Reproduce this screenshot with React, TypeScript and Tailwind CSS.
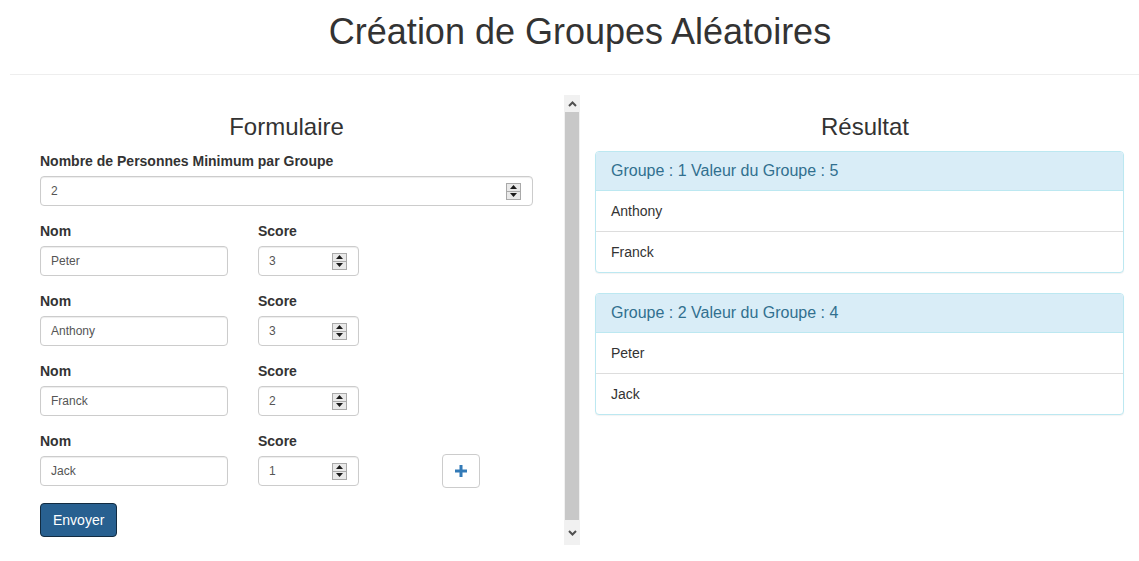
import React from 'react';

const font = { fontFamily: '"Liberation Sans", Arial, sans-serif' };

const Spinner: React.FC = () => (
  <div className="flex flex-col w-[15px] h-[17px] border border-[#a9a9a9] bg-[#e9e9e9] shrink-0">
    <div className="flex-1 flex items-center justify-center border-b border-[#a9a9a9]">
      <svg width="7" height="4" viewBox="0 0 7 4"><path d="M0 4 L3.5 0 L7 4 Z" fill="#1a1a1a" /></svg>
    </div>
    <div className="flex-1 flex items-center justify-center">
      <svg width="7" height="4" viewBox="0 0 7 4"><path d="M0 0 L3.5 4 L7 0 Z" fill="#1a1a1a" /></svg>
    </div>
  </div>
);

const NumberField: React.FC<{ value: string; className?: string }> = ({ value, className }) => (
  <div
    className={`flex items-center h-[30px] border border-[#ccc] rounded-[4px] bg-white pl-[10px] pr-[11px] shadow-[inset_0_1px_1px_rgba(0,0,0,0.075)] ${className ?? ''}`}
  >
    <span className="flex-1 text-[12px] text-[#555]">{value}</span>
    <Spinner />
  </div>
);

const TextField: React.FC<{ value: string }> = ({ value }) => (
  <div className="flex items-center w-[188px] h-[30px] border border-[#ccc] rounded-[4px] bg-white px-[10px] shadow-[inset_0_1px_1px_rgba(0,0,0,0.075)]">
    <span className="text-[12px] text-[#555]">{value}</span>
  </div>
);

const people = [
  { nom: 'Peter', score: '3' },
  { nom: 'Anthony', score: '3' },
  { nom: 'Franck', score: '2' },
  { nom: 'Jack', score: '1' },
];

const groups = [
  { title: 'Groupe : 1 Valeur du Groupe : 5', members: ['Anthony', 'Franck'] },
  { title: 'Groupe : 2 Valeur du Groupe : 4', members: ['Peter', 'Jack'] },
];

export default function App() {
  return (
    <div className="bg-white text-[#333] text-[14px] h-[561px] overflow-hidden pl-[10px]" style={font}>
      <div className="w-[1140px]">
        <h1 className="text-center text-[36px] leading-[40px] font-medium mt-[12px]">
          Création de Groupes Aléatoires
        </h1>
        <hr className="mt-[22px] mb-[20px] border-0 border-t border-[#eee]" />

        <div className="flex">
          {/* Formulaire */}
          <div className="w-[570px] h-[450px] flex overflow-hidden">
            <div className="flex-1 pl-[30px] pr-[31px] pt-[19px]">
              <h3 className="text-center text-[24px] leading-[26px] font-medium mb-[11px]">Formulaire</h3>
              <label className="block font-bold leading-[20px] mb-[5px]">Nombre de Personnes Minimum par Groupe</label>
              <NumberField value="2" />

              {people.map((p, i) => (
                <div key={i} className="flex items-end mt-[15px]">
                  <div className="w-[188px]">
                    <label className="block font-bold leading-[20px] mb-[5px]">Nom</label>
                    <TextField value={p.nom} />
                  </div>
                  <div className="w-[101px] ml-[30px]">
                    <label className="block font-bold leading-[20px] mb-[5px]">Score</label>
                    <NumberField value={p.score} />
                  </div>
                  {i === people.length - 1 && (
                    <button className="ml-[83px] mb-[-2px] w-[38px] h-[34px] border border-[#ccc] rounded-[4px] bg-white flex items-center justify-center">
                      <svg width="12" height="12" viewBox="0 0 12 12">
                        <rect x="0" y="4.5" width="12" height="3" fill="#337ab7" />
                        <rect x="4.5" y="0" width="3" height="12" fill="#337ab7" />
                      </svg>
                    </button>
                  )}
                </div>
              ))}

              <button className="mt-[17px] h-[34px] px-[12px] bg-[#286090] border border-[#122b40] rounded-[4px] text-white text-[14px]">
                Envoyer
              </button>
            </div>

            {/* scrollbar */}
            <div className="w-[16px] flex flex-col bg-[#f1f1f1]">
              <div className="h-[17px] flex items-center justify-center">
                <svg width="9" height="6" viewBox="0 0 9 6"><path d="M1 5 L4.5 1.5 L8 5" stroke="#505050" strokeWidth="2" fill="none" /></svg>
              </div>
              <div className="flex-1 mx-[1px] bg-[#c8c8c8]" />
              <div className="h-[25px] flex items-center justify-center">
                <svg width="9" height="6" viewBox="0 0 9 6"><path d="M1 1 L4.5 4.5 L8 1" stroke="#505050" strokeWidth="2" fill="none" /></svg>
              </div>
            </div>
          </div>

          {/* Résultat */}
          <div className="flex-1 pl-[15px] pr-[26px] pt-[19px]">
            <h3 className="text-center text-[24px] leading-[26px] font-medium mb-[11px] pl-[11px]">Résultat</h3>
            {groups.map((g, i) => (
              <div key={i} className="mb-[20px] border border-[#bce8f1] rounded-[4px] bg-white shadow-[0_1px_1px_rgba(0,0,0,0.05)] overflow-hidden">
                <div className="bg-[#d9edf7] text-[#31708f] text-[16px] leading-[18px] px-[15px] py-[10px] border-b border-[#bce8f1]">
                  {g.title}
                </div>
                {g.members.map((m, j) => (
                  <div
                    key={j}
                    className={`px-[15px] py-[10px] leading-[20px] ${j < g.members.length - 1 ? 'border-b border-[#ddd]' : ''}`}
                  >
                    {m}
                  </div>
                ))}
              </div>
            ))}
          </div>
        </div>
      </div>
    </div>
  );
}
